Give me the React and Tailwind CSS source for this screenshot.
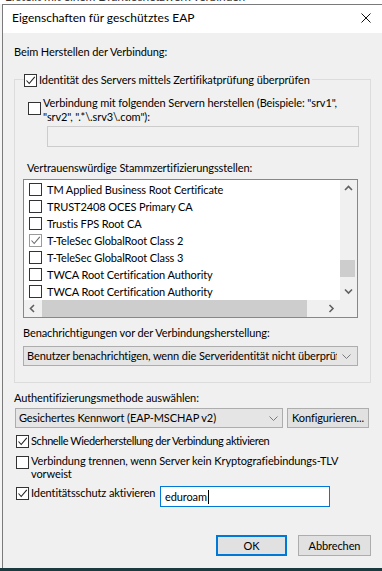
import React from "react";

function Check({ checked, muted }) {
  return (
    <span
      className={`inline-flex shrink-0 w-[13px] h-[13px] border bg-white items-center justify-center ${
        muted ? "border-[#9a9a9a]" : "border-[#333333]"
      }`}
    >
      {checked && (
        <svg width="11" height="11" viewBox="0 0 11 11">
          <path
            d="M1.5 5.5 L4.2 8.5 L9.8 1.8"
            fill="none"
            stroke={muted ? "#6a6a6a" : "#222222"}
            strokeWidth="1.1"
          />
        </svg>
      )}
    </span>
  );
}

function Chevron({ className = "" }) {
  return (
    <svg width="9" height="5" viewBox="0 0 9 5" className={className}>
      <path d="M0.5 0.5 L4.5 4.5 L8.5 0.5" fill="none" stroke="#7a7a7a" strokeWidth="1" />
    </svg>
  );
}

function Arrow({ dir }) {
  const paths = {
    up: "M1 5 L4.5 1.5 L8 5",
    down: "M1 1.5 L4.5 5 L8 1.5",
    left: "M5 1 L1.5 4.5 L5 8",
    right: "M1.5 1 L5 4.5 L1.5 8",
  };
  const vert = dir === "up" || dir === "down";
  return (
    <svg width={vert ? 9 : 7} height={vert ? 7 : 9} viewBox={vert ? "0 0 9 7" : "0 0 7 9"}>
      <path d={paths[dir]} fill="none" stroke="#606060" strokeWidth="1.6" />
    </svg>
  );
}

const certs = [
  ["TM Applied Business Root Certificate", false],
  ["TRUST2408 OCES Primary CA", false],
  ["Trustis FPS Root CA", false],
  ["T-TeleSec GlobalRoot Class 2", true],
  ["T-TeleSec GlobalRoot Class 3", false],
  ["TWCA Root Certification Authority", false],
  ["TWCA Root Certification Authority", false],
];

export default function App() {
  return (
    <div className="w-[382px] h-[571px] bg-white overflow-hidden flex flex-col font-['Lato','Noto_Sans',sans-serif] text-[11px] tracking-[-0.1px] text-black">
      <div className="h-[4px] overflow-hidden shrink-0">
        <div className="-mt-[11px] pl-[5px] leading-4 whitespace-nowrap text-[#333] text-[12px]">
          Erstellt mit einem Drahtlosnetzwerk verbinden
        </div>
      </div>
      <div className="flex-1 flex min-h-0">
        <div className="w-[2px] bg-[#f4f4f4]" />
        <div className="flex-1 flex flex-col border-l border-t border-[#7a7a7a] min-w-0">
          <div className="h-[28px] bg-white flex items-start justify-between pl-[9px] pr-[11px] pt-[5px] shrink-0">
            <span className="leading-4 text-[12px] tracking-normal">Eigenschaften für geschütztes EAP</span>
            <svg width="10" height="10" viewBox="0 0 10 10" className="mt-[3px]">
              <path d="M0.5 0.5 L9.5 9.5 M9.5 0.5 L0.5 9.5" stroke="#111" strokeWidth="1" />
            </svg>
          </div>
          <div className="flex-1 bg-[#f0f0f0] flex flex-col">
            <div className="mt-[11px] ml-[11px] leading-4 h-4">Beim Herstellen der Verbindung:</div>

            <div className="mt-[19px] ml-[11px] w-[357px] h-[304px] border border-[#dcdcdc] flex flex-col shrink-0">
              <div className="-mt-[8px] ml-[9px] h-4 w-fit inline-flex items-center gap-[2px] bg-[#f0f0f0] pr-[2px]">
                <Check checked />
                <span className="leading-4 whitespace-nowrap">
                  Identität des Servers mittels Zertifikatprüfung überprüfen
                </span>
              </div>

              <div className="mt-[8px] ml-[13px] flex items-start gap-[2px]">
                <span className="mt-[6px]">
                  <Check />
                </span>
                <span className="leading-[14px] whitespace-nowrap">
                  Verbindung mit folgenden Servern herstellen (Beispiele: "srv1",
                  <br />
                  "srv2", ".*\.srv3\.com"):
                </span>
              </div>

              <div className="mt-[2px] ml-[32px] w-[312px] h-[21px] border border-[#cccccc] bg-[#f0f0f0] shrink-0" />

              <div className="mt-[13px] ml-[12px] leading-4 h-4">Vertrauenswürdige Stammzertifizierungsstellen:</div>

              <div className="mt-[3px] ml-[8px] w-[335px] h-[139px] border border-[#828790] bg-white flex flex-col shrink-0">
                <div className="h-[120px] flex">
                  <div className="flex-1 pt-[1px] flex flex-col overflow-hidden">
                    {certs.map(([name, checked], i) => (
                      <div key={i} className="h-[17px] flex items-center pl-[5px] gap-[5px] whitespace-nowrap">
                        <Check checked={checked} muted={checked} />
                        <span className="leading-4">{name}</span>
                      </div>
                    ))}
                  </div>
                  <div className="w-[17px] bg-[#f0f0f0] flex flex-col">
                    <div className="h-[17px] flex items-center justify-center">
                      <Arrow dir="up" />
                    </div>
                    <div className="flex-1 flex flex-col">
                      <div className="h-[63px]" />
                      <div className="h-[17px] mx-0 bg-[#cdcdcd] w-[15px]" />
                    </div>
                    <div className="h-[17px] flex items-center justify-center">
                      <Arrow dir="down" />
                    </div>
                  </div>
                </div>
                <div className="h-[17px] flex bg-[#f0f0f0]">
                  <div className="w-[17px] flex items-center justify-center">
                    <Arrow dir="left" />
                  </div>
                  <div className="flex-1 flex items-stretch">
                    <div className="ml-[1px] w-[265px] bg-[#cdcdcd]" />
                  </div>
                  <div className="w-[17px] flex items-center justify-center">
                    <Arrow dir="right" />
                  </div>
                  <div className="w-[17px] bg-[#f0f0f0]" />
                </div>
              </div>

              <div className="mt-[7px] ml-[8px] leading-4 h-4">Benachrichtigungen vor der Verbindungsherstellung:</div>

              <div className="mt-[5px] ml-[8px] w-[335px] h-[20px] border border-[#adadad] bg-[#e5e5e5] flex items-center pl-[3px] pr-[6px] gap-[5px] shrink-0">
                <span className="flex-1 overflow-hidden whitespace-nowrap leading-4">
                  Benutzer benachrichtigen, wenn die Serveridentität nicht überprüft werden kann
                </span>
                <Chevron />
              </div>
            </div>

            <div className="mt-[7px] ml-[11px] leading-4 h-4">Authentifizierungsmethode auswählen:</div>

            <div className="mt-[2px] ml-[12px] flex gap-[4px]">
              <div className="w-[268px] h-[20px] border border-[#adadad] bg-[#e5e5e5] flex items-center pl-[3px] pr-[4px]">
                <span className="flex-1 whitespace-nowrap leading-4">Gesichertes Kennwort (EAP-MSCHAP v2)</span>
                <Chevron />
              </div>
              <div className="w-[82px] h-[20px] border border-[#adadad] bg-[#e1e1e1] flex items-center justify-center leading-4 whitespace-nowrap">
                Konfigurieren...
              </div>
            </div>

            <div className="mt-[5px] ml-[13px] h-4 flex items-center gap-[2px]">
              <Check checked />
              <span className="leading-4 whitespace-nowrap tracking-[-0.4px]">
                Schnelle Wiederherstellung der Verbindung aktivieren
              </span>
            </div>

            <div className="mt-[5px] ml-[13px] flex items-start gap-[2px]">
              <span className="mt-[2px]">
                <Check />
              </span>
              <span className="leading-[13px] whitespace-nowrap">
                Verbindung trennen, wenn Server kein Kryptografiebindungs-TLV
                <br />
                vorweist
              </span>
            </div>

            <div className="mt-[5px] ml-[13px] flex items-start gap-[2px]">
              <span className="mt-[2px]">
                <Check checked />
              </span>
              <span className="w-[127px] shrink-0 leading-4 whitespace-nowrap">Identitätsschutz aktivieren</span>
              <div className="mt-[1px] w-[170px] h-[21px] border border-[#0078d7] bg-white flex items-center pl-[4px] leading-4">
                eduroam
                <span className="inline-block w-[1px] h-[14px] bg-black ml-[1px]" />
              </div>
            </div>

            <div className="mt-[28px] flex justify-end gap-[11px] pr-[11px]">
              <div className="w-[71px] h-[21px] border-2 border-[#0078d7] bg-[#e1e1e1] flex items-center justify-center leading-4">
                OK
              </div>
              <div className="w-[73px] h-[21px] border border-[#adadad] bg-[#e1e1e1] flex items-center justify-center leading-4">
                Abbrechen
              </div>
            </div>
          </div>
        </div>
      </div>
      <div className="h-[3px] bg-[#1b3a40] shrink-0" />
    </div>
  );
}
